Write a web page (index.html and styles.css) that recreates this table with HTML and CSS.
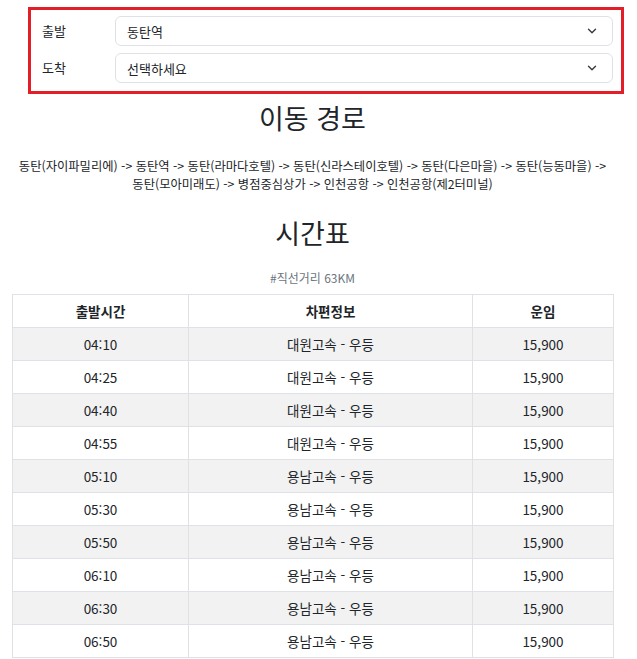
FILE: index.html
```html
<!DOCTYPE html>
<html lang="ko">
<head>
<meta charset="utf-8">
<title>시간표</title>
<link rel="stylesheet" href="styles.css">
</head>
<body>
<form class="search">
  <label class="search-label" for="dep">출발</label>
  <div class="select-wrap">
    <select id="dep" class="select"><option>동탄역</option></select>
    <svg class="chev" width="10" height="6" viewBox="0 0 10 6"><path d="M1.5 1.2l3.5 3.5 3.5-3.5" fill="none" stroke="#343a40" stroke-width="1.4" stroke-linecap="round" stroke-linejoin="round"/></svg>
  </div>
  <label class="search-label" for="arr">도착</label>
  <div class="select-wrap">
    <select id="arr" class="select"><option>선택하세요</option></select>
    <svg class="chev" width="10" height="6" viewBox="0 0 10 6"><path d="M1.5 1.2l3.5 3.5 3.5-3.5" fill="none" stroke="#343a40" stroke-width="1.4" stroke-linecap="round" stroke-linejoin="round"/></svg>
  </div>
</form>
<main class="content">
  <h2 class="title title-route">이동 경로</h2>
  <p class="route">동탄(자이파밀리에) -&gt; 동탄역 -&gt; 동탄(라마다호텔) -&gt; 동탄(신라스테이호텔) -&gt; 동탄(다은마을) -&gt; 동탄(능동마을) -&gt;<br>동탄(모아미래도) -&gt; 병점중심상가 -&gt; 인천공항 -&gt; 인천공항(제2터미널)</p>
  <h2 class="title title-time">시간표</h2>
  <p class="distance">#직선거리 63KM</p>
  <table class="timetable">
    <colgroup><col class="c1"><col class="c2"><col class="c3"></colgroup>
    <thead><tr><th>출발시간</th><th>차편정보</th><th>운임</th></tr></thead>
    <tbody>
      <tr><td>04:10</td><td>대원고속 - 우등</td><td>15,900</td></tr>
      <tr><td>04:25</td><td>대원고속 - 우등</td><td>15,900</td></tr>
      <tr><td>04:40</td><td>대원고속 - 우등</td><td>15,900</td></tr>
      <tr><td>04:55</td><td>대원고속 - 우등</td><td>15,900</td></tr>
      <tr><td>05:10</td><td>용남고속 - 우등</td><td>15,900</td></tr>
      <tr><td>05:30</td><td>용남고속 - 우등</td><td>15,900</td></tr>
      <tr><td>05:50</td><td>용남고속 - 우등</td><td>15,900</td></tr>
      <tr><td>06:10</td><td>용남고속 - 우등</td><td>15,900</td></tr>
      <tr><td>06:30</td><td>용남고속 - 우등</td><td>15,900</td></tr>
      <tr><td>06:50</td><td>용남고속 - 우등</td><td>15,900</td></tr>
    </tbody>
  </table>
</main>
</body>
</html>
```

FILE: styles.css
```css
* { box-sizing: border-box; }
html, body { margin: 0; padding: 0; background: #fff; }
body {
  font-family: "Noto Sans CJK KR", "Noto Sans", sans-serif;
  color: #212529;
  font-size: 13px;
}
.search {
  margin: 7px 0 0 28px;
  width: 596px;
  border: 3px solid #e41e26;
  padding: 6px 8px 8px 11px;
  display: grid;
  grid-template-columns: 73px 1fr;
  row-gap: 7px;
  align-items: center;
}
.search-label { font-size: 13px; line-height: 20px; }
.select-wrap { position: relative; }
.select {
  -webkit-appearance: none;
  appearance: none;
  display: block;
  width: 100%;
  height: 30px;
  border: 1px solid #dee2e6;
  border-radius: 6px;
  background: #fff;
  padding: 0 30px 0 11px;
  font-family: inherit;
  font-size: 13px;
  color: #212529;
  outline: none;
}
.chev { position: absolute; right: 16px; top: 12px; pointer-events: none; }
.content { margin: 0 24px 0 12px; text-align: center; }
.title {
  margin: 0;
  font-weight: 400;
  font-size: 27px;
  line-height: 31px;
}
.title-route { margin-top: 8px; }
.route {
  margin: 24px -6px 0;
  font-size: 12.3px;
  line-height: 18px;
  white-space: nowrap;
}
.title-time { margin-top: 24px; }
.distance {
  margin: 22px 0 0;
  font-size: 12px;
  line-height: 16px;
  color: #6c757d;
}
.timetable {
  margin-top: 8px;
  width: 601px;
  border-collapse: collapse;
  table-layout: fixed;
  font-size: 13.5px;
}
.c1 { width: 176px; }
.c2 { width: 284px; }
.c3 { width: 141px; }
.timetable th, .timetable td {
  border: 1px solid #dee2e6;
  height: 33px;
  padding: 0 8px;
  text-align: center;
  vertical-align: middle;
  line-height: 20px;
}
.timetable th { font-weight: 700; background: #fff; }
.timetable tbody tr:nth-child(odd) td { background: #f2f2f2; }
```
